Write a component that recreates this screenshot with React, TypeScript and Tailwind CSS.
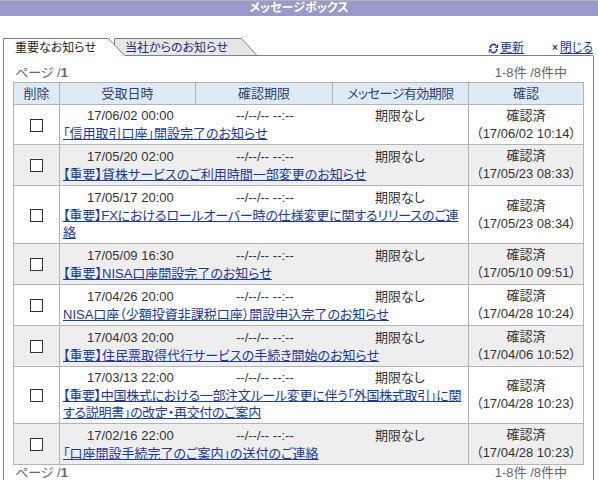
import React from "react";

const rows = [
  { d: "17/06/02 00:00", t: ["「信用取引口座」開設完了のお知らせ"], c: "17/06/02 10:14", h: "h-[40px]", k: "" },
  { d: "17/05/20 02:00", t: ["【重要】貸株サービスのご利用時間一部変更のお知らせ"], c: "17/05/23 08:33", h: "h-[41px]", k: "" },
  { d: "17/05/17 20:00", t: ["【重要】FXにおけるロールオーバー時の仕様変更に関するリリースのご連", "絡"], c: "17/05/23 08:34", h: "h-[58px]", k: "tracking-[-0.16px]" },
  { d: "17/05/09 16:30", t: ["【重要】NISA口座開設完了のお知らせ"], c: "17/05/10 09:51", h: "h-[41px]", k: "" },
  { d: "17/04/26 20:00", t: ["NISA口座（少額投資非課税口座）開設申込完了のお知らせ"], c: "17/04/28 10:24", h: "h-[41px]", k: "" },
  { d: "17/04/03 20:00", t: ["【重要】住民票取得代行サービスの手続き開始のお知らせ"], c: "17/04/06 10:52", h: "h-[41px]", k: "" },
  { d: "17/03/13 22:00", t: ["【重要】中国株式における一部注文ルール変更に伴う「外国株式取引」に関", "する説明書」の改定・再交付のご案内"], c: "17/04/28 10:23", h: "h-[57px]", k: "tracking-[-0.3px]" },
  { d: "17/02/16 22:00", t: ["「口座開設手続完了のご案内」の送付のご連絡"], c: "17/04/28 10:23", h: "h-[41px]", k: "" },
];

const Pager = ({ top }: { top?: boolean }) => (
  <div className={`flex justify-between items-end pl-[2px] pr-[16px] text-[#666666] ${top ? "h-[26px]" : "h-[18px] -mt-[1px]"}`}>
    <span>ページ /<b className="font-bold">1</b></span>
    <span>1-8件 /8件中</span>
  </div>
);

export default function App() {
  return (
    <div className="w-[598px] h-[480px] overflow-hidden bg-white text-[13px] leading-[18px] text-[#333333] [font-feature-settings:'palt']" style={{ fontFamily: '"Liberation Sans","Noto Sans CJK JP",sans-serif' }}>
      <div className="h-[16px] border-t border-[#b4b4b4] bg-[#9999cc] text-center text-[12px] font-bold leading-[15px] text-white">メッセージボックス</div>
      <div className="relative h-[40px] text-[12px]">
        <svg className="absolute left-0 top-0" width="598" height="40" viewBox="0 0 598 40">
          <path d="M114.5 40 V22.5 H241.5 L257.5 40" fill="#e6e6e6" stroke="#808080" />
          <path d="M3.5 40 V22.5 H108.5 L124.5 39.5 H593.5" fill="#ffffff" stroke="#808080" />
        </svg>
        <span className="absolute left-[15px] top-[23px] text-[#222222]">重要なお知らせ</span>
        <span className="absolute left-[125px] top-[23px] text-[#1f2a6b]">当社からのお知らせ</span>
        <div className="absolute left-[488px] top-[23px] flex items-center text-[#1a3aa0]">
          <svg width="11" height="11" viewBox="0 0 11 11" fill="none" stroke="#1a3aa0" strokeWidth="1.6" className="mr-[1px]">
            <path d="M2 5 A3.5 3.5 0 0 1 8 2.5 M9 6 A3.5 3.5 0 0 1 3 8.5" />
            <path d="M7 4.5 H10 V1.5 Z M4 6.5 H1 V9.5 Z" fill="#1a3aa0" strokeWidth="0.5" />
          </svg>
          <a className="underline">更新</a>
        </div>
        <div className="absolute left-[552px] top-[23px] flex items-center whitespace-nowrap text-[#1a3aa0]">
          <span className="text-[10px] font-bold mr-[2px]">×</span>
          <a className="underline">閉じる</a>
        </div>
      </div>
      <div className="ml-[3px] w-[591px] h-[424px] border-l border-r border-[#808080] pl-[9px] pr-[10px]">
        <Pager top />
        <table className="w-[570px] table-fixed border-collapse border border-[#b4b4b4]">
          <thead>
            <tr className="h-[22px] bg-[#deeaf4] text-[#2f3f6f] text-center">
              <th className="w-[46px] font-normal border border-[#b4b4b4]">削除</th>
              <th className="w-[136px] font-normal border border-[#b4b4b4]">受取日時</th>
              <th className="w-[137px] font-normal border border-[#b4b4b4]">確認期限</th>
              <th className="w-[136px] font-normal tracking-[-0.5px] border border-[#b4b4b4]">メッセージ有効期限</th>
              <th className="w-[115px] font-normal border border-[#b4b4b4]">確認</th>
            </tr>
          </thead>
          <tbody>
            {rows.map((r, i) => (
              <tr key={i} className={`${r.h} ${i % 2 ? "bg-[#eeeeee]" : "bg-white"}`}>
                <td className="border border-[#b4b4b4] text-center align-middle">
                  <span className="inline-block align-middle w-[13px] h-[13px] border border-[#333333] bg-white" />
                </td>
                <td colSpan={3} className="border border-[#b4b4b4] align-middle pl-[3px] pr-[4px]">
                  <div className="grid grid-cols-[173px_139px_1fr]">
                    <span className="pl-[24px]">{r.d}</span>
                    <span>--/--/-- --:--</span>
                    <span>期限なし</span>
                  </div>
                  <a className={`block underline text-[#1a3aa0] leading-[17px] whitespace-nowrap ${r.k}`}>
                    {r.t.map((line, j) => (
                      <React.Fragment key={j}>
                        {j > 0 && <br />}
                        {line}
                      </React.Fragment>
                    ))}
                  </a>
                </td>
                <td className="border border-[#b4b4b4] text-center align-middle">
                  <div>確認済</div>
                  <div>（{r.c}）</div>
                </td>
              </tr>
            ))}
          </tbody>
        </table>
        <Pager />
      </div>
    </div>
  );
}
